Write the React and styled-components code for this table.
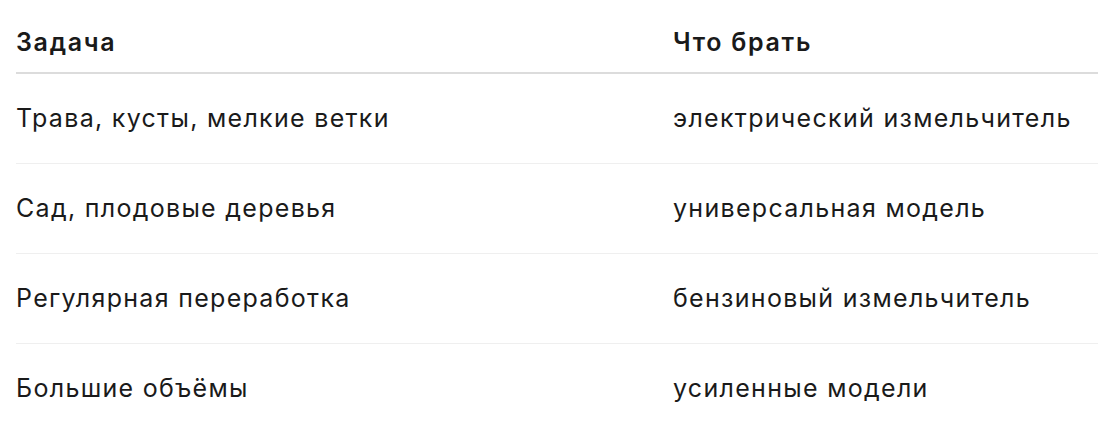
import React from "react";
import styled, { createGlobalStyle } from "styled-components";

const Global = createGlobalStyle`
  html, body { margin: 0; padding: 0; background: #fff; }
  body { font-family: Inter, "Noto Sans", sans-serif; color: #1a1a1a; }
`;

const Wrap = styled.div`
  padding: 12px 0 0 16px;
`;

const Table = styled.table`
  width: 1082px;
  border-collapse: collapse;
  font-size: 25px;
  line-height: 30px;
  letter-spacing: 1.3px;
`;

const Th = styled.th`
  text-align: left;
  font-weight: 600;
  letter-spacing: 1.7px;
  padding: 15px 0 15px 0;
  border-bottom: 2px solid #dcdcdc;
  width: ${(p) => p.$w || "auto"};
`;

const Row = styled.tr`
  border-bottom: 1px solid ${(p) => (p.$last ? "transparent" : "#efefef")};
`;

const Td = styled.td`
  padding: 29px 0 30px 0;
  font-weight: 400;
`;

const rows = [
  ["Трава, кусты, мелкие ветки", "электрический измельчитель"],
  ["Сад, плодовые деревья", "универсальная модель"],
  ["Регулярная переработка", "бензиновый измельчитель"],
  ["Большие объёмы", "усиленные модели"],
];

export default function App() {
  return (
    <Wrap>
      <Global />
      <Table>
        <thead>
          <tr>
            <Th $w="657px">Задача</Th>
            <Th>Что брать</Th>
          </tr>
        </thead>
        <tbody>
          {rows.map((r, i) => (
            <Row key={i} $last={i === rows.length - 1}>
              <Td>{r[0]}</Td>
              <Td>{r[1]}</Td>
            </Row>
          ))}
        </tbody>
      </Table>
    </Wrap>
  );
}
